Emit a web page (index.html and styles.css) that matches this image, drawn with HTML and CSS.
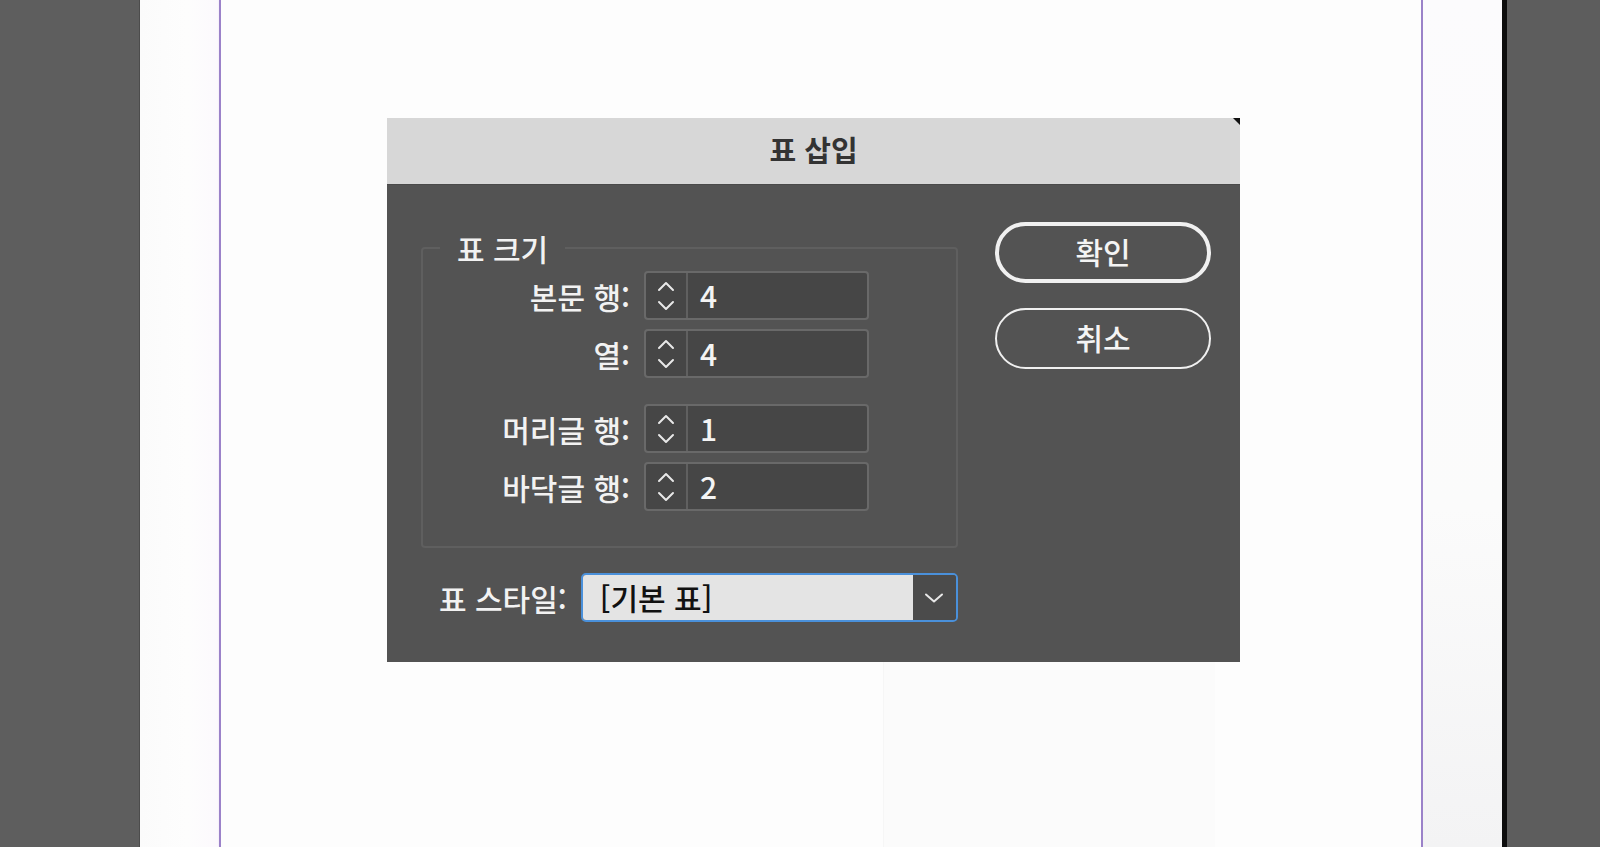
FILE: index.html
```html
<!DOCTYPE html>
<html lang="ko">
<head>
<meta charset="utf-8">
<title>표 삽입</title>
<link rel="stylesheet" href="styles.css">
</head>
<body>
<div class="gutter-left"></div>
<div class="page">
  <div class="margin margin-l"></div>
  <div class="guide"></div>
  <div class="content"><div class="content-shade"></div></div>
  <div class="guide"></div>
  <div class="margin margin-r"></div>
</div>
<div class="edge"></div>
<div class="gutter-right"></div>

<div class="dialog">
  <div class="titlebar">표 삽입</div>
  <div class="dialog-body">
    <div class="left-col">
      <fieldset class="group">
        <legend class="group-title">표 크기</legend>
        <div class="rows">
          <div class="row">
            <span class="label">본문 행:</span>
            <div class="spin">
              <div class="spin-btn">
                <svg width="18" height="30" viewBox="0 0 18 30"><path d="M2 9 L9 2 L16 9" /><path d="M2 21 L9 28 L16 21" /></svg>
              </div>
              <div class="spin-val">4</div>
            </div>
          </div>
          <div class="row">
            <span class="label">열:</span>
            <div class="spin">
              <div class="spin-btn">
                <svg width="18" height="30" viewBox="0 0 18 30"><path d="M2 9 L9 2 L16 9" /><path d="M2 21 L9 28 L16 21" /></svg>
              </div>
              <div class="spin-val">4</div>
            </div>
          </div>
          <div class="row row-gap">
            <span class="label">머리글 행:</span>
            <div class="spin">
              <div class="spin-btn">
                <svg width="18" height="30" viewBox="0 0 18 30"><path d="M2 9 L9 2 L16 9" /><path d="M2 21 L9 28 L16 21" /></svg>
              </div>
              <div class="spin-val">1</div>
            </div>
          </div>
          <div class="row">
            <span class="label">바닥글 행:</span>
            <div class="spin">
              <div class="spin-btn">
                <svg width="18" height="30" viewBox="0 0 18 30"><path d="M2 9 L9 2 L16 9" /><path d="M2 21 L9 28 L16 21" /></svg>
              </div>
              <div class="spin-val">2</div>
            </div>
          </div>
        </div>
      </fieldset>
      <div class="style-row">
        <span class="label">표 스타일:</span>
        <div class="select">
          <div class="select-val">[기본 표]</div>
          <div class="select-btn">
            <svg width="20" height="10" viewBox="0 0 20 10"><path d="M2 1.5 L10 8.5 L18 1.5" /></svg>
          </div>
        </div>
      </div>
    </div>
    <div class="right-col">
      <button class="btn btn-primary">확인</button>
      <button class="btn">취소</button>
    </div>
  </div>
</div>
</body>
</html>
```

FILE: styles.css
```css
* { box-sizing: border-box; }

html, body {
  margin: 0;
  padding: 0;
}

body {
  width: 1600px;
  height: 847px;
  overflow: hidden;
  display: flex;
  background: #5d5d5d;
  font-family: "Noto Sans CJK KR", "Noto Sans", sans-serif;
  position: relative;
}

.gutter-left {
  width: 140px;
  background: #5e5e5e;
  border-right: 1px solid #4c4c4c;
}

.page {
  width: 1362px;
  display: flex;
  background: #fdfdfd;
}

.margin {
  width: 79px;
}

.margin-l {
  background: linear-gradient(to right, #fbfbfb, #fdfdfd 60%, #fcf9fd);
}

.margin-r {
  background: linear-gradient(to bottom, #fcfbfd 0%, #fbfbfb 60%, #f3f3f4 100%);
}

.guide {
  width: 2px;
  background: #9b82c9;
  box-shadow: 0 0 2px #e8dcf4;
}

.content {
  flex: 1;
  background: #fdfdfd;
  position: relative;
}

.content-shade {
  position: absolute;
  left: 662px;
  top: 662px;
  width: 332px;
  bottom: 0;
  background: #fbfbfb;
  border-left: 1px solid #f6f6f6;
}

.edge {
  width: 5px;
  background: #0d0d0d;
}

.gutter-right {
  flex: 1;
  background: #5d5d5d;
}

/* Dialog */
.dialog {
  position: absolute;
  left: 387px;
  top: 118px;
  width: 853px;
  height: 544px;
  display: flex;
  flex-direction: column;
  background: #535353;
}

.titlebar {
  height: 67px;
  background: #d7d7d7;
  border-bottom: 1px solid #4a4a4a;
  color: #333;
  font-weight: 700;
  font-size: 29px;
  display: flex;
  align-items: center;
  justify-content: center;
  padding-bottom: 4px;
  position: relative;
}

.titlebar::after {
  content: "";
  position: absolute;
  right: 0;
  top: 0;
  width: 0;
  height: 0;
  border-top: 7px solid #111;
  border-left: 7px solid transparent;
}

.dialog-body {
  flex: 1;
  display: flex;
  padding: 0 29px 0 34px;
}

.left-col {
  width: 537px;
  display: flex;
  flex-direction: column;
}

.group {
  margin: 45px 0 0 0;
  padding: 5px 0 35px 0;
  border: 2px solid #5f5f5f;
  border-radius: 4px;
  min-width: 0;
}

.group-title {
  margin-left: 17px;
  padding: 0 17px;
  font-size: 30px;
  font-weight: 500;
  line-height: 36px;
  color: #f2f2f2;
}

.rows {
  display: flex;
  flex-direction: column;
  gap: 9px;
}

.row {
  display: flex;
  align-items: center;
  height: 49px;
}

.row-gap {
  margin-top: 17px;
}

.label {
  color: #f2f2f2;
  font-size: 30px;
  font-weight: 500;
  line-height: 36px;
  white-space: nowrap;
}

.row .label {
  width: 207px;
  text-align: right;
  margin-right: 14px;
}

.spin {
  width: 225px;
  height: 49px;
  display: flex;
  border: 2px solid #696969;
  border-radius: 4px;
  background: #464646;
}

.spin-btn {
  width: 42px;
  border-right: 2px solid #606060;
  display: flex;
  align-items: center;
  justify-content: center;
}

.spin-btn svg path,
.select-btn svg path {
  fill: none;
  stroke: #e8e8e8;
  stroke-width: 2;
  stroke-linecap: round;
  stroke-linejoin: round;
}

.spin-val {
  flex: 1;
  color: #f4f4f4;
  font-size: 30px;
  font-weight: 500;
  line-height: 45px;
  padding-left: 12px;
}

.style-row {
  display: flex;
  align-items: center;
  margin-top: 25px;
  padding-left: 18px;
}

.style-row .label {
  margin-right: 14px;
}

.select {
  width: 377px;
  height: 49px;
  display: flex;
  border: 2px solid #4a90da;
  border-radius: 5px;
  overflow: hidden;
}

.select-val {
  flex: 1;
  background: #e4e4e4;
  color: #111;
  font-size: 30px;
  font-weight: 500;
  line-height: 45px;
  padding-left: 17px;
}

.select-btn {
  width: 43px;
  background: #4b4b4b;
  display: flex;
  align-items: center;
  justify-content: center;
}

.right-col {
  flex: 1;
  display: flex;
  flex-direction: column;
  align-items: flex-end;
  padding-top: 37px;
  gap: 25px;
}

.btn {
  width: 216px;
  height: 61px;
  border-radius: 31px;
  border: 2px solid #f0f0f0;
  background: transparent;
  color: #f4f4f4;
  font-family: "Noto Sans CJK KR", "Noto Sans", sans-serif;
  font-size: 30px;
  font-weight: 500;
  padding: 0 0 3px 0;
}

.btn-primary {
  border-width: 4px;
}
```
